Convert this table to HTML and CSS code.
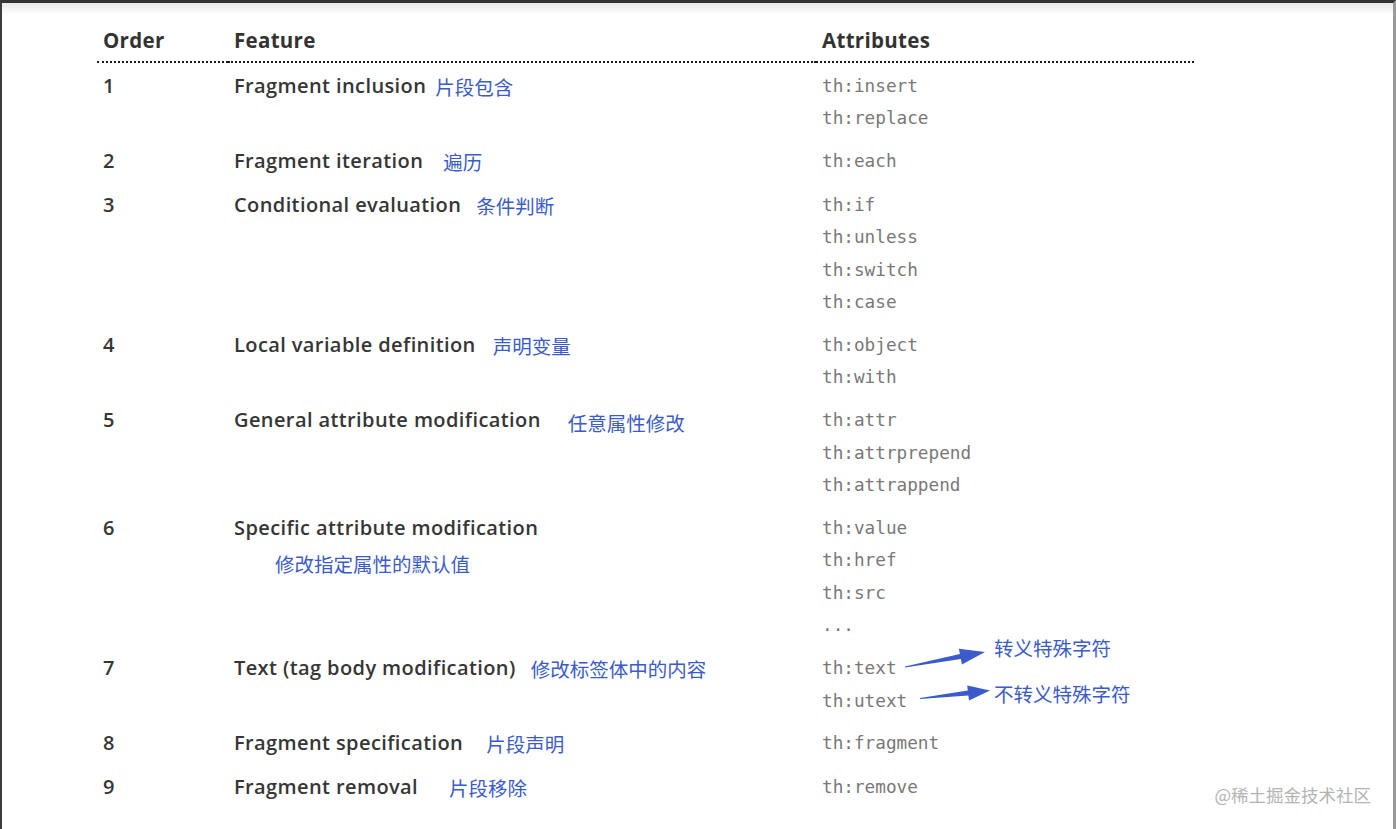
FILE: index.html
```html
<!DOCTYPE html>
<html lang="en">
<head>
<meta charset="utf-8">
<title>Thymeleaf attribute precedence</title>
<link rel="stylesheet" href="styles.css">
</head>
<body>
<div class="frame">
  <table class="prec">
    <colgroup>
      <col class="c-order">
      <col class="c-feature">
      <col class="c-attr">
    </colgroup>
    <thead>
      <tr><th>Order</th><th>Feature</th><th>Attributes</th></tr>
    </thead>
    <tbody>
      <tr>
        <td class="num">1</td>
        <td class="feat">Fragment inclusion<span class="cn g9">片段包含</span></td>
        <td class="attrs"><div class="a">th:insert</div><div class="a">th:replace</div></td>
      </tr>
      <tr>
        <td class="num">2</td>
        <td class="feat">Fragment iteration<span class="cn g20">遍历</span></td>
        <td class="attrs"><div class="a">th:each</div></td>
      </tr>
      <tr>
        <td class="num">3</td>
        <td class="feat">Conditional evaluation<span class="cn g15">条件判断</span></td>
        <td class="attrs"><div class="a">th:if</div><div class="a">th:unless</div><div class="a">th:switch</div><div class="a">th:case</div></td>
      </tr>
      <tr>
        <td class="num">4</td>
        <td class="feat">Local variable definition<span class="cn g17">声明变量</span></td>
        <td class="attrs"><div class="a">th:object</div><div class="a">th:with</div></td>
      </tr>
      <tr>
        <td class="num">5</td>
        <td class="feat">General attribute modification<span class="cn g27 low">任意属性修改</span></td>
        <td class="attrs"><div class="a">th:attr</div><div class="a">th:attrprepend</div><div class="a">th:attrappend</div></td>
      </tr>
      <tr>
        <td class="num">6</td>
        <td class="feat">Specific attribute modification<div class="cn-block">修改指定属性的默认值</div></td>
        <td class="attrs"><div class="a">th:value</div><div class="a">th:href</div><div class="a">th:src</div><div class="a">...</div></td>
      </tr>
      <tr>
        <td class="num">7</td>
        <td class="feat">Text (tag body modification)<span class="cn g15">修改标签体中的内容</span></td>
        <td class="attrs">
          <div class="a">th:text<span class="callout c1"><svg class="arrow" width="82" height="22" viewBox="0 0 82 22"><polygon points="0,18.5 54.9,6.1 53.9,0.7 80,4 56.9,16.5 55.9,11.1 0,19.5"/></svg><span class="cn-note n1">转义特殊字符</span></span></div>
          <div class="a">th:utext<span class="callout c2"><svg class="arrow" width="72" height="17" viewBox="0 0 72 17"><polygon points="0,13 47.8,5.5 47.25,0.55 70,5.5 49,15.45 48.4,10.5 0,14"/></svg><span class="cn-note n2">不转义特殊字符</span></span></div>
        </td>
      </tr>
      <tr>
        <td class="num">8</td>
        <td class="feat">Fragment specification<span class="cn g23">片段声明</span></td>
        <td class="attrs"><div class="a">th:fragment</div></td>
      </tr>
      <tr>
        <td class="num">9</td>
        <td class="feat">Fragment removal<span class="cn g31">片段移除</span></td>
        <td class="attrs"><div class="a">th:remove</div></td>
      </tr>
    </tbody>
  </table>
  <div class="watermark">@稀土掘金技术社区</div>
</div>
</body>
</html>
```

FILE: styles.css
```css
html, body {
  margin: 0;
  padding: 0;
  background: #ffffff;
}

.frame {
  position: relative;
  box-sizing: border-box;
  width: 1396px;
  height: 829px;
  border-top: 3px solid #333333;
  border-left: 2px solid #3c3c3c;
  border-right: 3px solid #9a9a9a;
  background: linear-gradient(#e9e9e9, #ffffff 12px) no-repeat;
  padding: 21px 0 0 95px;
  font-family: "Open Sans", "Noto Sans", sans-serif;
  color: #353535;
}

.prec {
  border-collapse: collapse;
  border-spacing: 0;
  table-layout: fixed;
  width: 1097px;
}

.c-order { width: 131px; }
.c-feature { width: 588px; }
.c-attr { width: 378px; }

.prec th {
  text-align: left;
  font-weight: 700;
  font-size: 20.5px;
  letter-spacing: 0.3px;
  line-height: 32px;
  padding: 0 6px 5px 6px;
  border-bottom: 2px dotted #1a1a1a;
  color: #333333;
}

.prec td {
  vertical-align: top;
  padding: 6.5px 6px 3.75px 6px;
  line-height: 32.5px;
}

.num, .feat {
  font-weight: 600;
  font-size: 20px;
  letter-spacing: 0.4px;
  color: #363636;
}

.attrs {
  font-family: "DejaVu Sans Mono", "Liberation Mono", monospace;
  font-size: 17.7px;
  color: #787878;
}

.a {
  position: relative;
  height: 32.5px;
  white-space: nowrap;
}

.cn, .cn-block, .cn-note {
  font-family: "Noto Sans CJK SC", "Noto Sans", sans-serif;
  font-weight: 400;
  font-size: 19.5px;
  letter-spacing: 0;
  color: #3b5bcc;
}

.cn {
  vertical-align: -2px;
}

.cn.low { vertical-align: -4px; }

.g9 { margin-left: 9px; }
.g15 { margin-left: 15px; }
.g17 { margin-left: 17px; }
.g20 { margin-left: 20px; }
.g23 { margin-left: 23px; }
.g27 { margin-left: 27px; }
.g31 { margin-left: 31px; }

.cn-block {
  margin-top: 4px;
  padding-left: 41px;
  line-height: 32.5px;
}

.callout {
  position: absolute;
  display: flex;
  align-items: flex-start;
  line-height: 26px;
}

.c1 { left: 83px; top: -17px; }
.c2 { left: 98px; top: -4px; }

.arrow { display: block; fill: #3b5bcc; }
.c1 .arrow { margin-top: 13px; }
.c2 .arrow { margin-top: 4.5px; }

.n1 { margin-left: 7px; }
.n2 { margin-left: 2px; }

.watermark {
  position: absolute;
  right: 22px;
  bottom: 22px;
  font-family: "Noto Sans CJK SC", sans-serif;
  font-size: 17.5px;
  line-height: 24px;
  color: #b4b4b4;
}
```
